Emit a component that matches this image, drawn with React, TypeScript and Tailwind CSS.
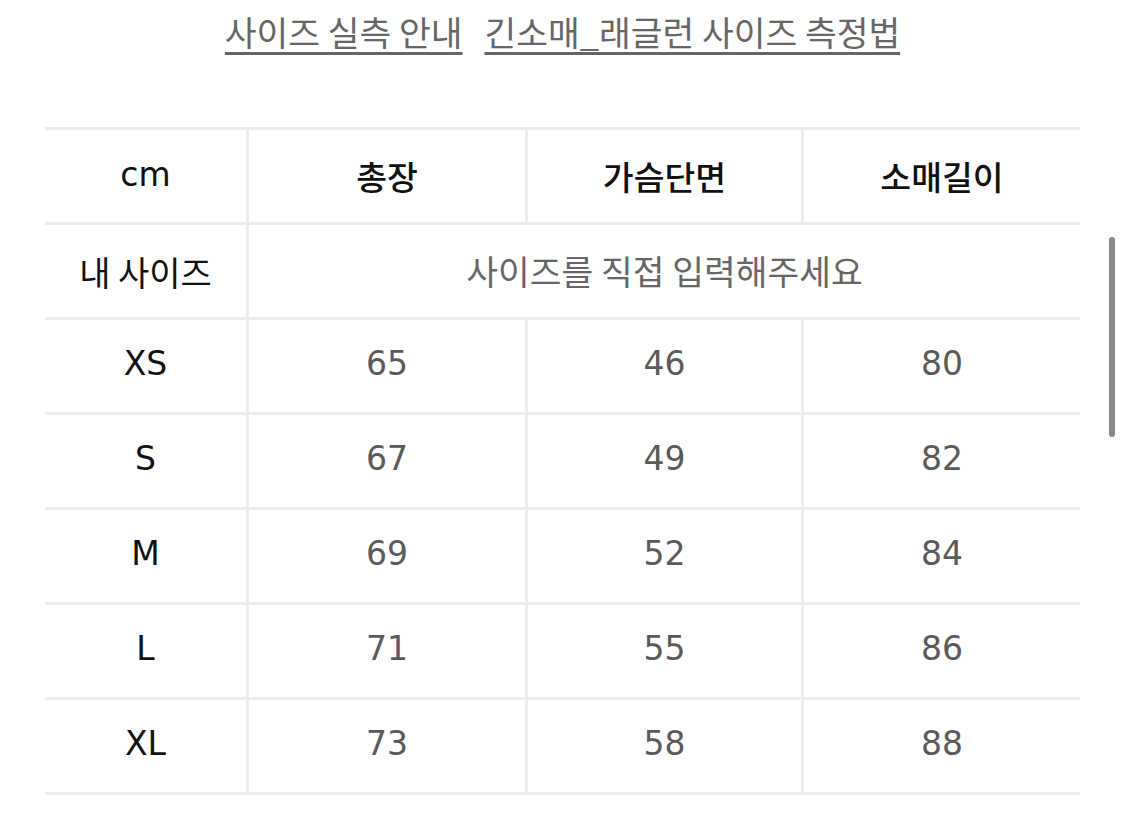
import React from "react";

const rows = [
  ["XS", "65", "46", "80"],
  ["S", "67", "49", "82"],
  ["M", "69", "52", "84"],
  ["L", "71", "55", "86"],
  ["XL", "73", "58", "88"],
];

export default function App() {
  return (
    <div className="relative w-[1125px] h-[837px] bg-white overflow-hidden">
      <div className="flex justify-center gap-[22px] pt-[8px] text-[34.5px] leading-[46px] text-[#666] font-['Noto_Sans_CJK_KR',sans-serif]">
        <span className="underline decoration-[3px] underline-offset-[6px] decoration-[#666]">사이즈 실측 안내</span>
        <span className="underline decoration-[3px] underline-offset-[6px] decoration-[#666]">긴소매_래글런 사이즈 측정법</span>
      </div>

      <div className="mt-[73px] ml-[45px] w-[1035px] border-t-[3px] border-[#ececec]">
        <div className="grid grid-cols-[201px_279px_276px_279px]">
          <div className="h-[95px] flex items-center justify-center pb-[2px] border-b-[3px] border-[#ececec] text-[33px] text-[#111] font-['DejaVu_Sans',sans-serif]">cm</div>
          {["총장", "가슴단면", "소매길이"].map((h) => (
            <div key={h} className="h-[95px] flex items-center justify-center border-l-[3px] border-b-[3px] border-[#ececec] text-[33.5px] font-medium text-[#111] font-['Noto_Sans_CJK_KR',sans-serif]">{h}</div>
          ))}
          <div className="h-[95px] flex items-center justify-center border-b-[3px] border-[#ececec] text-[34px] text-[#111] font-['Noto_Sans_CJK_KR',sans-serif]">내 사이즈</div>
          <div className="col-span-3 h-[95px] flex items-center justify-center border-l-[3px] border-b-[3px] border-[#ececec] text-[34.5px] text-[#666] font-['Noto_Sans_CJK_KR',sans-serif]">사이즈를 직접 입력해주세요</div>
          {rows.map((r) => (
            <React.Fragment key={r[0]}>
              <div className="h-[95px] flex items-center justify-center pb-[4px] border-b-[3px] border-[#ececec] text-[33px] text-[#111] font-['DejaVu_Sans',sans-serif]">{r[0]}</div>
              {r.slice(1).map((v, i) => (
                <div key={i} className="h-[95px] flex items-center justify-center pb-[4px] border-l-[3px] border-b-[3px] border-[#ececec] text-[33px] text-[#5a5a5a] font-['DejaVu_Sans',sans-serif]">{v}</div>
              ))}
            </React.Fragment>
          ))}
        </div>
      </div>

      <div className="absolute left-[1109px] top-[237px] w-[6px] h-[200px] rounded-full bg-[#8a8a8a]" />
    </div>
  );
}
